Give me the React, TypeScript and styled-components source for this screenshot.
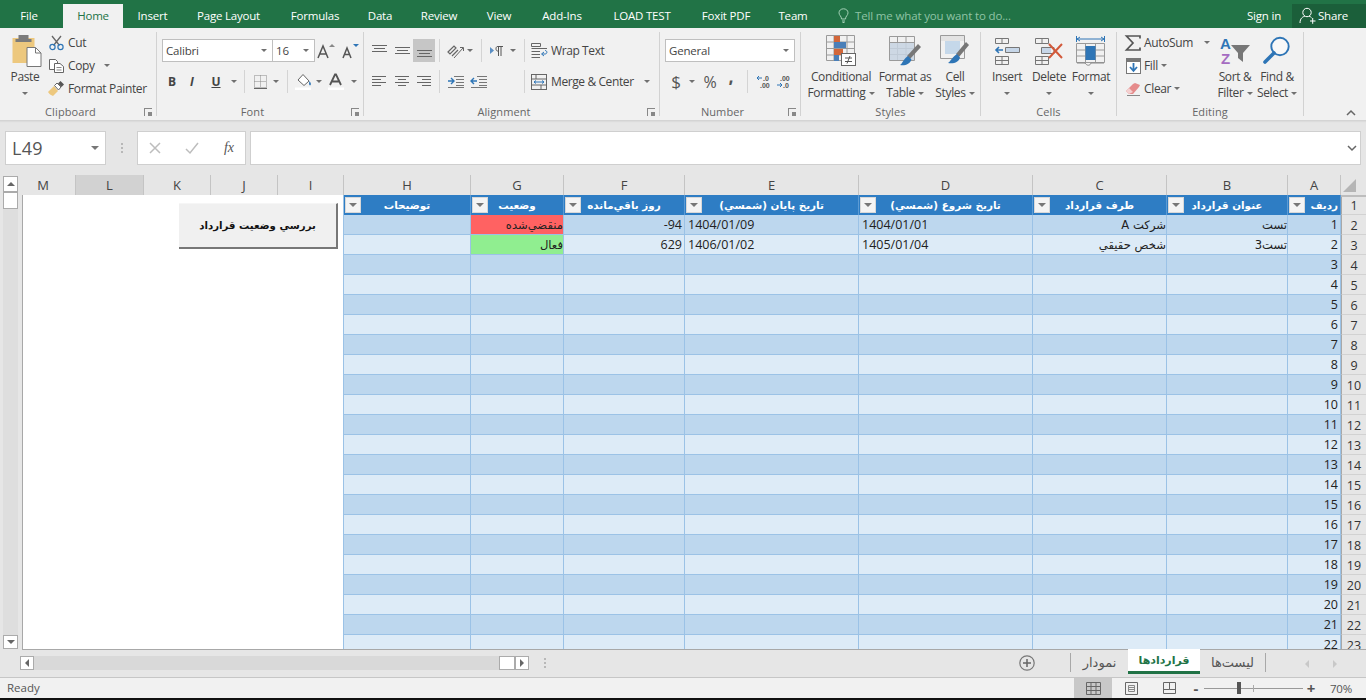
import React from "react";
import styled, { createGlobalStyle } from "styled-components";

const Global = createGlobalStyle`
  html, body { margin: 0; padding: 0; background: #e6e6e6; overflow: hidden; }
  * { box-sizing: border-box; }
`;

const UI = `"Open Sans", "DejaVu Sans", sans-serif`;
const AR = `"DejaVu Sans", "Noto Sans", sans-serif`;

const App_ = styled.div`
  width: 1366px; height: 700px; display: flex; flex-direction: column;
  font-family: ${UI}; color: #444; background: #e6e6e6; overflow: hidden;
`;

/* Title tabs */
const TabStrip = styled.div`
  height: 28px; background: #217346; display: flex; align-items: flex-end; flex: none;
`;
const MenuTab = styled.div<{ $w: number; $on?: boolean }>`
  width: ${p => p.$w}px; height: 24px; line-height: 23px; text-align: center; font-size: 11.5px;
  letter-spacing: -0.2px; color: ${p => (p.$on ? "#217346" : "#fff")};
  background: ${p => (p.$on ? "#f1f1f1" : "transparent")};
  &:first-child { padding-right: 5px; }
`;
const TellMe = styled.div`
  display: flex; align-items: center; gap: 6px; height: 24px; padding: 0 0 1px 19px; font-size: 11.5px;
  letter-spacing: -0.15px; color: #8fc3a5; flex: 1;
`;
const SignIn = styled.div`
  height: 24px; line-height: 23px; font-size: 11.5px; letter-spacing: -0.2px; color: #fff; margin-right: 11px;
`;
const ShareBtn = styled.div`
  width: 74px; height: 24px; background: #1b5f3a; color: #fff; font-size: 11.5px; letter-spacing: -0.2px;
  display: flex; align-items: center; gap: 2px; padding: 0 0 1px 7px;
`;

/* Ribbon */
const Ribbon = styled.div`
  height: 93px; background: #f1f1f1; display: flex; padding-top: 4px; flex: none;
  border-bottom: 1px solid #d4d4d4; box-shadow: 0 1px 1px #dcdcdc; position: relative;
`;
const Group = styled.div<{ $w: number }>`
  width: ${p => p.$w}px; height: 84px; border-right: 1px solid #d2d2d2; flex: none; position: relative;
  display: flex; flex-direction: column;
`;
const GroupBody = styled.div<{ $pl?: number }>`
  height: 72px; display: flex; padding-left: ${p => p.$pl ?? 0}px;
`;
const GroupLabel = styled.div<{ $launch?: boolean }>`
  height: 12px; line-height: 16px; text-align: center; font-size: 11px; color: #666; letter-spacing: 0.1px;
  padding-right: ${p => (p.$launch ? 15 : 0)}px;
`;
const Launcher = styled.div`
  position: absolute; right: 4px; bottom: 0; width: 8px; height: 8px;
  border-left: 1px solid #888; border-top: 1px solid #888;
  &::after { content: ""; position: absolute; right: 0; bottom: 0; width: 4px; height: 4px; background: #888; }
`;
const TwoRows = styled.div`
  display: flex; flex-direction: column; gap: 8px; padding-top: 7px;
`;
const ToolRow = styled.div`
  height: 23px; display: flex; align-items: center;
`;
const Tool = styled.div<{ $w: number; $on?: boolean }>`
  width: ${p => p.$w}px; height: 23px; flex: none; display: flex; align-items: center; justify-content: center;
  background: ${p => (p.$on ? "#c6c6c6" : "transparent")};
  font-size: 12px; font-weight: 700; color: #444;
`;
const BigGlyph = styled.span<{ $s: number; $bold?: boolean; $up?: number }>`
  font-size: ${p => p.$s}px; font-weight: ${p => (p.$bold ? 800 : 400)}; color: #555; line-height: 1;
  margin-top: -${p => p.$up ?? 0}px;
`;
const VSep = styled.div<{ $w?: number }>`
  width: ${p => p.$w ?? 8}px; height: 23px; flex: none; position: relative;
  &::after { content: ""; position: absolute; left: 50%; top: 0; bottom: 0; width: 1px; background: #d4d4d4; }
`;
const Caret = styled.span`
  display: block; width: 0; height: 0; border-left: 3px solid transparent; border-right: 3px solid transparent;
  border-top: 3px solid #707070; flex: none;
`;
const Combo = styled.div<{ $w: number }>`
  width: ${p => p.$w}px; height: 23px; background: #fff; border: 1px solid #bfbfbf; flex: none;
  display: flex; align-items: center; justify-content: space-between; padding: 0 5px 0 3px;
  font-size: 11.5px; letter-spacing: -0.2px; color: #444;
  & + & { border-left: 0; }
`;
const Stack = styled.div<{ $w: number }>`
  width: ${p => p.$w}px; flex: none; display: flex; flex-direction: column; margin-top: -1px;
`;
const SmallItem = styled.div`
  height: 23px; display: flex; align-items: center; font-size: 12px; letter-spacing: -0.35px; color: #444;
`;
const IconCell = styled.div<{ $w: number }>`
  width: ${p => p.$w}px; flex: none; display: flex; justify-content: center; align-items: center;
`;
const ItemCaret = styled(Caret)<{ $ml: number }>`
  margin-left: ${p => p.$ml}px;
`;
const TextTool = styled.div`
  height: 23px; display: flex; align-items: center; font-size: 12px; letter-spacing: -0.4px; color: #444; white-space: nowrap;
`;
const Large = styled.div<{ $w: number }>`
  width: ${p => p.$w}px; flex: none; display: flex; flex-direction: column; align-items: center;
  font-size: 12px; letter-spacing: -0.35px; color: #444; text-align: center;
`;
const LargeIcon = styled.div`
  height: 37px; display: flex; align-items: center; justify-content: center;
`;
const LargeLine = styled.div`
  height: 16px; line-height: 16px; display: flex; align-items: center; justify-content: center; gap: 3px; white-space: nowrap;
`;
const Collapse = styled.div`
  position: absolute; right: 10px; bottom: 4px;
`;

/* Formula bar */
const FormulaBar = styled.div`
  height: 54px; padding: 10px 5px 10px 5px; display: flex; background: #e6e6e6; flex: none;
`;
const NameBox = styled.div`
  width: 101px; background: #fff; border: 1px solid #cfcfcf; display: flex; align-items: center;
  justify-content: space-between; padding: 0 6px 0 6px; font-size: 18px; color: #555; letter-spacing: 0.3px;
`;
const Dots = styled.div<{ $w: number }>`
  width: ${p => p.$w}px; flex: none; display: flex; flex-direction: column; align-items: center; justify-content: center; gap: 2px;
  & > i { width: 2px; height: 2px; background: #b8b8b8; display: block; }
`;
const FxBox = styled.div`
  width: 109px; background: #fff; border: 1px solid #cfcfcf; display: flex; align-items: center;
  justify-content: space-between; padding: 0 11px; margin-right: 4px;
`;
const FxText = styled.span`
  font-family: "Liberation Serif", serif; font-style: italic; font-size: 14px; color: #555;
`;
const FormulaInput = styled.div`
  width: 1111px; background: #fff; border: 1px solid #cfcfcf; display: flex; align-items: center; justify-content: flex-end; padding-right: 3px;
`;

/* Sheet */
const COLS = [54, 68, 67, 67, 66, 127, 93, 121, 174, 174, 134, 121, 53, 25];
const LETTERS = ["M", "L", "K", "J", "I", "H", "G", "F", "E", "D", "C", "B", "A"];
const DATACOLS = COLS.slice(5).map(n => n + "px").join(" ");

const Sheet = styled.div`
  height: 475px; display: flex; flex: none;
`;
const VScroll = styled.div`
  width: 22px; flex: none; padding: 1px 4px 1px 3px; display: flex; flex-direction: column;
`;
const ScrollBtn = styled.div<{ $h: number }>`
  width: 15px; height: ${p => p.$h}px; background: #fff; border: 1px solid #ababab; display: flex; align-items: center; justify-content: center; flex: none;
`;
const VTrough = styled.div`
  flex: 1; background: #dedede;
`;
const SheetMain = styled.div`
  width: 1344px; display: flex; flex-direction: column; flex: none;
`;
const ColHeaders = styled.div`
  height: 20px; display: grid; grid-template-columns: ${COLS.map(n => n + "px").join(" ")}; flex: none;
`;
const ColHead = styled.div<{ $on?: boolean; $first?: boolean }>`
  font-size: 13px; line-height: 20px; text-align: center; color: #444;
  padding-right: ${p => (p.$first ? 11 : 0)}px;
  background: ${p => (p.$on ? "#d2d2d2" : "transparent")};
  border-right: 1px solid #c4c4c4; border-bottom: 2px solid ${p => (p.$on ? "#217346" : "#bdbdbd")};
`;
const Corner = styled.div`
  position: relative; border-bottom: 2px solid #bdbdbd;
  &::after {
    content: ""; position: absolute; right: 10px; bottom: 3px; width: 0; height: 0;
    border-left: 13px solid transparent; border-bottom: 13px solid #b5b5b5;
  }
`;
const SheetBody = styled.div`
  flex: 1; display: flex; overflow: hidden; border-bottom: 1px solid #a8a8a8;
`;
const WhitePane = styled.div`
  width: 322px; flex: none; background: #fff; position: relative; border-left: 1px solid #a8a8a8; border-right: 1px solid #9bc2e6;
`;
const MacroButton = styled.div`
  position: absolute; left: 156px; top: 8px; width: 159px; height: 46px; background: #f0f0f0;
  border-right: 2px solid #777; border-bottom: 2px solid #777; border-top: 1px solid #f6f6f6;
  display: flex; align-items: center; justify-content: center;
  direction: rtl; font-family: ${AR}; font-weight: 700; font-size: 10.2px; color: #111;
`;
const DataGrid = styled.div`
  display: grid; grid-template-columns: ${DATACOLS}; grid-auto-rows: 20px; flex: none; align-content: start;
`;
const HeadCell = styled.div<{ $edge?: boolean }>`
  background: #2e7dc4; border-right: 1px solid #5b9bd5; display: flex; align-items: center; position: relative;
  color: #fff; font-family: ${AR}; font-weight: 700; font-size: 10.4px; direction: rtl;
  justify-content: ${p => (p.$edge ? "flex-start" : "center")};
  padding-right: ${p => (p.$edge ? 2 : 0)}px;
`;
const FilterBtn = styled.span`
  position: absolute; left: 1px; top: 2px; width: 16px; height: 16px; background: #f4f4f4;
  border: 1px solid #d8d8d8; display: flex; align-items: center; justify-content: center;
  &::after { content: ""; border-left: 4px solid transparent; border-right: 4px solid transparent; border-top: 4px solid #777; }
`;
const Cell = styled.div<{ $alt: boolean; $bg?: string; $kind?: "ar" | "num" | "date" }>`
  background: ${p => p.$bg ?? (p.$alt ? "#ddebf7" : "#bdd7ee")};
  border-right: 1px solid #9bc2e6; border-bottom: 1px solid #9bc2e6;
  line-height: 20px; white-space: nowrap; overflow: hidden; color: #222;
  padding: 0 ${p => (p.$kind === "num" ? 2 : 0)}px 0 ${p => (p.$kind === "date" ? 3 : 0)}px;
  text-align: ${p => (p.$kind === "date" ? "left" : "right")};
  direction: ${p => (p.$kind === "ar" ? "rtl" : "ltr")};
  ${p => (p.$kind === "ar" ? "text-align: start;" : "")}
  font-family: ${p => (p.$kind === "ar" ? AR : UI)};
  font-size: ${p => (p.$kind === "ar" ? "11.6px" : "12.5px")};
`;
const RowHead = styled.div`
  background: #e6e6e6; border-bottom: 1px solid #d2d2d2; text-align: center; font-size: 12.5px; line-height: 21px; color: #333;
  border-left: 1px solid #a8a8a8;
`;

/* Tab bar */
const TabBar = styled.div`
  height: 27px; display: flex; background: #e6e6e6; flex: none; padding-left: 20px;
`;
const HScroll = styled.div`
  width: 509px; height: 14px; margin-top: 6px; display: flex; flex: none;
`;
const HButton = styled.div`
  width: 14px; height: 14px; background: #fff; border: 1px solid #ababab; display: flex; align-items: center; justify-content: center; flex: none;
`;
const HTrough = styled.div`
  flex: 1; background: #d9d9d9;
`;
const HThumb = styled.div`
  width: 16px; background: #fff; border: 1px solid #ababab; flex: none;
`;
const HDots = styled(Dots)`
  height: 14px; margin-top: 6px;
`;
const PlusWrap = styled.div`
  width: 86px; margin-left: 423px; flex: none; display: flex; align-items: center; justify-content: center; padding-bottom: 1px;
`;
const SheetTabs = styled.div`
  display: flex; align-items: flex-start; flex: none; border-left: 1px solid #a8a8a8; margin-top: 3px; height: 19px;
`;
const SheetTab = styled.div<{ $w: number; $on?: boolean; $last?: boolean }>`
  width: ${p => p.$w}px; height: ${p => (p.$on ? 25 : 19)}px; margin-top: ${p => (p.$on ? -4 : 0)}px; flex: none;
  display: flex; align-items: center; justify-content: center; direction: rtl;
  font-family: ${AR}; font-size: ${p => (p.$on ? 11 : 13)}px; font-weight: ${p => (p.$on ? 700 : 400)};
  color: ${p => (p.$on ? "#217346" : "#555")};
  background: ${p => (p.$on ? "#fff" : "transparent")};
  border-bottom: ${p => (p.$on ? "3px solid #217346" : "0")};
  border-right: ${p => (p.$last ? "1px solid #a8a8a8" : "0")};
`;
const NavArrows = styled.div`
  flex: 1; display: flex; align-items: center; justify-content: flex-end; gap: 20px; padding-right: 27px;
`;

/* Status */
const Status = styled.div`
  height: 21px; background: #f1f1f1; border-top: 1px solid #c6c6c6; display: flex; align-items: center; flex: none;
  font-size: 11.5px; color: #555; padding-left: 7px;
`;
const ReadyText = styled.span`
  margin-top: -2px;
`;
const ViewBtn = styled.div<{ $on?: boolean }>`
  width: 38px; height: 20px; flex: none; display: flex; align-items: center; justify-content: center;
  background: ${p => (p.$on ? "#c8c8c8" : "transparent")};
`;
const ViewGroup = styled.div`
  margin-left: auto; display: flex; align-items: center;
`;
const ZoomSign = styled.div`
  width: 16px; flex: none; text-align: center; font-size: 15px; font-weight: 700; color: #555; line-height: 20px;
`;
const Slider = styled.div`
  width: 99px; height: 1px; background: #999; position: relative; flex: none;
`;
const SliderThumb = styled.div`
  position: absolute; left: 33px; top: -6px; width: 4px; height: 12px; background: #555;
`;
const SliderTick = styled.div`
  position: absolute; left: 49px; top: -3px; width: 1px; height: 7px; background: #aaa;
`;
const ZoomPct = styled.div`
  width: 47px; text-align: right; padding-right: 14px; flex: none; font-size: 11.5px; letter-spacing: -0.2px;
`;
const BottomLine = styled.div`
  height: 2px; background: #111; flex: none;
`;

/* Icons */
const S = styled.svg`
  display: block; flex: none; overflow: visible;
`;
const Ic = ({ w, h, children }: { w: number; h: number; children: React.ReactNode }) => (
  <S width={w} height={h} viewBox={`0 0 ${w} ${h}`} fill="none">{children}</S>
);
const Lines = ({ ys, xs, w = 15, c = "#666" }: { ys: number[]; xs: [number, number][]; w?: number; c?: string }) => (
  <Ic w={w} h={15}>
    {ys.map((y, i) => <path key={i} d={`M${xs[i][0]} ${y + 0.5}H${xs[i][1]}`} stroke={c} />)}
  </Ic>
);
const PasteI = () => (
  <Ic w={30} h={33}>
    <g transform="translate(1.5 0)">
      <rect x="1" y="4" width="22" height="25" fill="#edc87e" />
      <rect x="7" y="1" width="10" height="6" fill="#7b7b7b" />
      <rect x="4" y="5" width="16" height="3" fill="#7b7b7b" />
      <path d="M15.5 13.5H24L29.5 19V32.5H15.5Z" fill="#fff" stroke="#777" />
      <path d="M24 13.5V19H29.5" stroke="#777" />
    </g>
  </Ic>
);
const CutI = () => (
  <Ic w={15} h={15}>
    <path d="M3 1L10.5 10.5M12 1L4.5 10.5" stroke="#666" strokeWidth="1.3" />
    <circle cx="3.5" cy="12" r="2.6" stroke="#2e75b6" strokeWidth="1.2" />
    <circle cx="11.5" cy="12" r="2.6" stroke="#2e75b6" strokeWidth="1.2" />
  </Ic>
);
const CopyI = () => (
  <Ic w={15} h={15}>
    <path d="M.5 1.5H6.5L8.5 3.5V11.5H.5Z" fill="#fff" stroke="#666" />
    <path d="M5.5 5.5H11L14.5 8.5V14.5H5.5Z" fill="#fff" stroke="#666" />
    <path d="M7.5 9.5H12.5M7.5 12H12.5" stroke="#888" />
  </Ic>
);
const PainterI = () => (
  <Ic w={16} h={15}>
    <path d="M0 11L6 5L10 10L5 15C3 14 1 13 0 11Z" fill="#edc87e" />
    <path d="M6.5 4.5L9 2L13 6L10.5 9Z" fill="#fff" stroke="#666" />
    <path d="M10 2.5L12.5 0L16 3.5L13.5 6Z" fill="#555" />
  </Ic>
);
const BigA = ({ up }: { up: boolean }) => (
  <Ic w={20} h={16}>
    <path d={up ? "M1 15L6 3L11 15M3 11H9" : "M3 15L7 5L11 15M4.5 11.5H9.5"} stroke="#555" strokeWidth="1.5" />
    <path d={up ? "M12 4L15 1L18 4Z" : "M13 1H19L16 4Z"} fill={up ? "#888" : "#2e75b6"} />
  </Ic>
);
const BorderI = () => (
  <Ic w={15} h={15}>
    <path d="M1.5 1.5H13.5V13.5H1.5ZM7.5 1.5V13.5M1.5 7.5H13.5" stroke="#888" strokeDasharray="1 1" />
    <path d="M1 14.5H14" stroke="#666" />
  </Ic>
);
const FillI = () => (
  <Ic w={18} h={17}>
    <path d="M3 7L8 1.5L14 8L9 12.5Z" fill="#fff" stroke="#666" />
    <path d="M14.5 8C16 10 16.5 12 15 12.5C13.5 12 14 10 14.5 8Z" fill="#2e75b6" />
    <rect x="0" y="14.5" width="16" height="2.5" fill="#fff" />
  </Ic>
);
const FontColorI = () => (
  <Ic w={18} h={17}>
    <path d="M3 12L8 1.5H9L14 12M5 8.5H12" stroke="#555" strokeWidth="1.8" />
    <rect x="1" y="14.5" width="16" height="2.5" fill="#fff" />
  </Ic>
);
const OrientI = () => (
  <Ic w={17} h={16}>
    <path d="M1 9L7 3L9 5L3 11ZM5 13L11 7" stroke="#666" strokeWidth="1.2" />
    <path d="M7 15L16 5" stroke="#666" />
    <path d="M13 4.5H16.5V8" stroke="#666" />
  </Ic>
);
const RtlI = () => (
  <Ic w={14} h={12}>
    <path d="M0 2L4 5.5L0 9Z" fill="#5b8fc4" />
    <path d="M10 1.5H7.5C5.5 1.5 5.5 6 7.5 6H8M8.5 1.5V11M11 1.5V11M7.5 1.5H13" stroke="#555" />
  </Ic>
);
const WrapI = () => (
  <Ic w={17} h={16}>
    <path d="M.5 .5H9.5V3.5H.5ZM.5 5.5H16M.5 8.5H9M.5 11.5H9M.5 14.5H9" stroke="#666" />
    <path d="M11 11H14C16.5 11 16.5 7.5 14 7.5" stroke="#2e75b6" />
    <path d="M13 9L10.5 11L13 13" stroke="#2e75b6" />
  </Ic>
);
const MergeI = () => (
  <Ic w={16} h={16}>
    <rect x=".5" y=".5" width="15" height="15" stroke="#666" />
    <path d="M.5 5H15.5M.5 11H15.5M5 .5V5M10 11V15.5" stroke="#666" />
    <path d="M3 8H13M5 6.5L3 8L5 9.5M11 6.5L13 8L11 9.5" stroke="#2e75b6" />
  </Ic>
);
const IndentI = ({ flip }: { flip?: boolean }) => (
  <Ic w={17} h={13}>
    <path d="M7 1.5H17M9 4.5H17M9 7.5H17M9 10.5H17" stroke="#777" />
    <path d={flip ? "M7 6H1M4 3L1 6L4 9" : "M1 6H7M4 3L7 6L4 9"} stroke="#2e75b6" strokeWidth="1.4" />
    <path d="M1 12.5H17" stroke="#777" />
  </Ic>
);
const DecI = ({ more }: { more: boolean }) => (
  <Ic w={16} h={14}>
    <text x={more ? 7 : 4} y="6" fontSize="7" fontFamily="Liberation Sans" fill="#555">{more ? ".0" : ".00"}</text>
    <text x={more ? 4 : 7} y="13" fontSize="7" fontFamily="Liberation Sans" fill="#555">{more ? ".00" : ".0"}</text>
    <path d={more ? "M6 3H1M3 1L1 3L3 5" : "M1 10H6M4 8L6 10L4 12"} stroke="#2e75b6" />
  </Ic>
);
const grid = "#9a9a9a";
const CondI = () => (
  <Ic w={30} h={32}>
    <path d="M.5 .5H28.5V25.5H.5ZM.5 7H28.5M.5 13.5H28.5M.5 20H28.5M8 .5V25.5M21 .5V25.5" stroke={grid} />
    <rect x="8" y="1" width="6" height="6" fill="#d2673a" />
    <rect x="8" y="7" width="12" height="6" fill="#4a7fb8" />
    <rect x="8" y="14" width="9" height="6" fill="#d2673a" />
    <rect x="8" y="20" width="5" height="6" fill="#4a7fb8" />
    <rect x="15.5" y="18.5" width="14" height="12" fill="#fff" stroke="#666" />
    <path d="M19 23H26M19 26.5H26M24 21L21 28.5" stroke="#555" />
  </Ic>
);
const TableI = () => (
  <Ic w={34} h={32}>
    <path d="M1.5 1.5H26.5V25.5H1.5ZM1.5 7.5H26.5M1.5 13.5H26.5M1.5 19.5H26.5M9.5 1.5V25.5M18 1.5V25.5" stroke={grid} />
    <rect x="2" y="8" width="24" height="17" fill="#c7d4e2" opacity=".85" />
    <path d="M33 12L22 24L19 21L30 9Z" fill="#777" />
    <path d="M20 21L23.5 24.5C22 29 17 31 12 30C15 28 15 24 20 21Z" fill="#2e75b6" />
  </Ic>
);
const CellStyleI = () => (
  <Ic w={30} h={32}>
    <path d="M.5 .5H24.5V23.5H.5Z" stroke={grid} />
    <rect x="1" y="1" width="23" height="5" fill="#e3e3e3" />
    <rect x="5" y="6" width="15" height="13" fill="#c5d8ea" />
    <path d="M29 10L19 22L16 19L26 7Z" fill="#777" />
    <path d="M17 19L20 22.5C19 27 14 29 8 28C11 26 12 22 17 19Z" fill="#2e75b6" />
  </Ic>
);
const InsertI = () => (
  <Ic w={28} h={28}>
    <path d="M2.5 1.5H15.5V6.5H2.5ZM9 1.5V6.5M12.5 10.5H26.5V15.5H12.5ZM17 10.5V15.5M22 10.5V15.5M2.5 19.5H15.5V27.5H2.5ZM9 19.5V27.5M2.5 23.5H15.5" stroke="#777" />
    <rect x="13" y="11" width="13" height="4" fill="#c6d6e8" />
    <path d="M10 13H3M6 10L3 13L6 16" stroke="#2e75b6" strokeWidth="1.6" />
  </Ic>
);
const DeleteI = () => (
  <Ic w={30} h={28}>
    <path d="M1.5 1.5H14.5V6.5H1.5ZM8 1.5V6.5M7.5 10.5H20V16.5H7.5ZM1.5 19.5H14.5V27.5H1.5ZM8 19.5V27.5M1.5 23.5H14.5" stroke="#777" />
    <rect x="8" y="11" width="9" height="5" fill="#c6d6e8" />
    <path d="M15 7L28 21M28 7L15 21" stroke="#d2593a" strokeWidth="2" />
  </Ic>
);
const FormatI = () => (
  <Ic w={30} h={31}>
    <path d="M.5 1V7M28.5 1V7M1 4H28M4 2L1 4L4 6M25 2L28 4L25 6" stroke="#2e75b6" />
    <path d="M.5 8.5H28.5V27.5H.5ZM.5 15H28.5M.5 21H28.5M9.5 8.5V27.5M19.5 8.5V27.5" stroke={grid} />
    <rect x="9.5" y="11" width="10" height="14" fill="#2e75b6" />
    <path d="M1 28H9C11 31 14 31 15 28H28" stroke="#888" fill="#f1f1f1" />
  </Ic>
);
const SumI = () => (
  <Ic w={16} h={16}>
    <path d="M15 3.5V1H1.5L8 8L1.5 15H15V12.5" stroke="#555" strokeWidth="1.7" />
  </Ic>
);
const FillDownI = () => (
  <Ic w={15} h={16}>
    <rect x=".5" y=".5" width="14" height="15" fill="#fff" stroke="#777" />
    <rect x="0" y="0" width="15" height="4" fill="#777" />
    <path d="M7.5 5V12M4 9L7.5 13L11 9" stroke="#2e75b6" strokeWidth="1.8" />
  </Ic>
);
const ClearI = () => (
  <Ic w={15} h={14}>
    <path d="M0 9L7 2L9 1L14 3L13 5L7 12H3Z" fill="#e58b8b" />
    <path d="M3 12L0 9L3 6L7 10Z" fill="#f4d0d0" />
    <path d="M1 13.5H14" stroke="#888" />
  </Ic>
);
const SortI = () => (
  <Ic w={31} h={29}>
    <text x="0" y="13" fontSize="15" fontWeight="700" fontFamily="Liberation Sans" fill="#2e75b6">A</text>
    <text x="1" y="28" fontSize="15" fontWeight="700" fontFamily="Liberation Sans" fill="#a56cc1">Z</text>
    <path d="M11 9H30L23 17V26L18 22V17Z" fill="#777" />
  </Ic>
);
const FindI = () => (
  <Ic w={28} h={29}>
    <circle cx="17" cy="10.5" r="8.7" stroke="#2e75b6" strokeWidth="1.9" fill="#fff" fillOpacity=".5" />
    <path d="M11 17L2 26" stroke="#2e75b6" strokeWidth="3.6" strokeLinecap="round" />
  </Ic>
);
const BulbI = () => (
  <Ic w={11} h={15}>
    <path d="M3.5 11C3.5 8 1 7.5 1 4.8C1 2.4 3 .8 5.5 .8C8 .8 10 2.4 10 4.8C10 7.5 7.5 8 7.5 11ZM4 13H7M4.5 14.5H6.5" stroke="#a6d2b8" />
  </Ic>
);
const PersonI = () => (
  <Ic w={17} h={17}>
    <circle cx="8" cy="5.5" r="4.2" stroke="#fff" />
    <path d="M1 16C1 11 4 9.8 6 9M10 9C11 9.4 12 10 12.6 10.8M11 14H16.5M13.7 11V16.8" stroke="#fff" />
  </Ic>
);
const Chevron = ({ up, c = "#666" }: { up?: boolean; c?: string }) => (
  <Ic w={10} h={6}>
    <path d={up ? "M1 5L5 1L9 5" : "M1 1L5 5L9 1"} stroke={c} strokeWidth="1.5" />
  </Ic>
);
const Tri = ({ d, c = "#666" }: { d: "u" | "d" | "l" | "r"; c?: string }) => {
  const paths = { u: "M0 6L4 2L8 6Z", d: "M0 2L8 2L4 6Z", l: "M6 0V8L2 4Z", r: "M2 0V8L6 4Z" };
  return <Ic w={8} h={8}><path d={paths[d]} fill={c} /></Ic>;
};

const menu: [string, number, boolean?][] = [
  ["File", 63], ["Home", 60, true], ["Insert", 59], ["Page Layout", 93], ["Formulas", 80], ["Data", 50],
  ["Review", 68], ["View", 52], ["Add-Ins", 74], ["LOAD TEST", 86], ["Foxit PDF", 82], ["Team", 52],
];
const L3 = (a: number, b: number, c: number) => [a, b, c];

const headers = ["توضيحات", "وضعيت", "روز باقي‌مانده", "تاريخ پايان (شمسي)", "تاريخ شروع (شمسي)", "طرف قرارداد", "عنوان قرارداد", "رديف"];

type Row = { g?: string; gBg?: string; f?: string; e?: string; d?: string; c?: string; b?: string };
const rows: Row[] = [
  { g: "منقضي‌شده", gBg: "#ff6262", f: "-94", e: "1404/01/09", d: "1404/01/01", c: "شركت A", b: "تست" },
  { g: "فعال", gBg: "#90ee90", f: "629", e: "1406/01/02", d: "1405/01/04", c: "شخص حقيقي", b: "تست3" },
];

const dataRows = Array.from({ length: 22 }, (_, i) => i);

export default function App() {
  return (
    <App_>
      <Global />
      <TabStrip>
        {menu.map(([t, w, on]) => <MenuTab key={t} $w={w} $on={on}>{t}</MenuTab>)}
        <TellMe><BulbI />Tell me what you want to do...</TellMe>
        <SignIn>Sign in</SignIn>
        <ShareBtn><PersonI />Share</ShareBtn>
      </TabStrip>

      <Ribbon>
        <Group $w={157}>
          <GroupBody $pl={6}>
            <Large $w={38}>
              <LargeIcon><PasteI /></LargeIcon>
              <LargeLine>Paste</LargeLine>
              <LargeLine><Caret /></LargeLine>
            </Large>
            <Stack $w={110}>
              <SmallItem><IconCell $w={24}><CutI /></IconCell>Cut</SmallItem>
              <SmallItem><IconCell $w={24}><CopyI /></IconCell>Copy<ItemCaret $ml={9} /></SmallItem>
              <SmallItem><IconCell $w={24}><PainterI /></IconCell>Format Painter</SmallItem>
            </Stack>
          </GroupBody>
          <GroupLabel $launch>Clipboard</GroupLabel>
          <Launcher />
        </Group>

        <Group $w={207}>
          <GroupBody $pl={5}>
            <TwoRows>
              <ToolRow>
                <Combo $w={111}>Calibri<Caret /></Combo>
                <Combo $w={42}>16<Caret /></Combo>
                <Tool $w={24}><BigA up /></Tool>
                <Tool $w={22}><BigA up={false} /></Tool>
              </ToolRow>
              <ToolRow>
                <Tool $w={20}>B</Tool>
                <Tool $w={20}><i>I</i></Tool>
                <Tool $w={28}><u>U</u></Tool>
                <Tool $w={8}><Caret /></Tool>
                <VSep $w={12} />
                <Tool $w={20}><BorderI /></Tool>
                <Tool $w={12}><Caret /></Tool>
                <VSep $w={10} />
                <Tool $w={24}><FillI /></Tool>
                <Tool $w={6}><Caret /></Tool>
                <Tool $w={28}><FontColorI /></Tool>
                <Tool $w={8}><Caret /></Tool>
              </ToolRow>
            </TwoRows>
          </GroupBody>
          <GroupLabel $launch>Font</GroupLabel>
          <Launcher />
        </Group>

        <Group $w={296}>
          <GroupBody $pl={4}>
            <TwoRows>
              <ToolRow>
                <Tool $w={23}><Lines ys={L3(2, 5, 8)} xs={[[0, 15], [2, 13], [0, 15]]} /></Tool>
                <Tool $w={22}><Lines ys={L3(4, 7, 10)} xs={[[0, 15], [2, 13], [0, 15]]} /></Tool>
                <Tool $w={22} $on><Lines ys={L3(7, 10, 13)} xs={[[0, 15], [2, 13], [0, 15]]} /></Tool>
                <VSep />
                <Tool $w={24}><OrientI /></Tool>
                <Tool $w={6}><Caret /></Tool>
                <VSep $w={16} />
                <Tool $w={16}><RtlI /></Tool>
                <Tool $w={16}><Caret /></Tool>
                <VSep $w={6} />
                <Tool $w={24}><WrapI /></Tool>
                <TextTool>Wrap Text</TextTool>
              </ToolRow>
              <ToolRow>
                <Tool $w={23}><Lines ys={[2, 5, 8, 11]} xs={[[0, 14], [0, 9], [0, 14], [0, 9]]} /></Tool>
                <Tool $w={22}><Lines ys={[2, 5, 8, 11]} xs={[[0, 14], [3, 11], [0, 14], [3, 11]]} /></Tool>
                <Tool $w={22}><Lines ys={[2, 5, 8, 11]} xs={[[0, 14], [5, 14], [0, 14], [5, 14]]} /></Tool>
                <VSep />
                <Tool $w={24}><IndentI /></Tool>
                <Tool $w={22}><IndentI flip /></Tool>
                <Tool $w={32} />
                <VSep $w={6} />
                <Tool $w={24}><MergeI /></Tool>
                <TextTool>Merge &amp; Center</TextTool>
                <ItemCaret $ml={10} />
              </ToolRow>
            </TwoRows>
          </GroupBody>
          <GroupLabel $launch>Alignment</GroupLabel>
          <Launcher />
        </Group>

        <Group $w={141}>
          <GroupBody $pl={5}>
            <TwoRows>
              <ToolRow>
                <Combo $w={130}>General<Caret /></Combo>
              </ToolRow>
              <ToolRow>
                <Tool $w={22}><BigGlyph $s={17}>$</BigGlyph></Tool>
                <Tool $w={10}><Caret /></Tool>
                <Tool $w={26}><BigGlyph $s={16}>%</BigGlyph></Tool>
                <Tool $w={16}><BigGlyph $s={15} $bold $up={8}>,</BigGlyph></Tool>
                <VSep $w={16} />
                <Tool $w={18}><DecI more /></Tool>
                <Tool $w={22}><DecI more={false} /></Tool>
              </ToolRow>
            </TwoRows>
          </GroupBody>
          <GroupLabel $launch>Number</GroupLabel>
          <Launcher />
        </Group>

        <Group $w={180}>
          <GroupBody>
            <Large $w={80}>
              <LargeIcon><CondI /></LargeIcon>
              <LargeLine>Conditional</LargeLine>
              <LargeLine>Formatting<Caret /></LargeLine>
            </Large>
            <Large $w={48}>
              <LargeIcon><TableI /></LargeIcon>
              <LargeLine>Format as</LargeLine>
              <LargeLine>Table<Caret /></LargeLine>
            </Large>
            <Large $w={52}>
              <LargeIcon><CellStyleI /></LargeIcon>
              <LargeLine>Cell</LargeLine>
              <LargeLine>Styles<Caret /></LargeLine>
            </Large>
          </GroupBody>
          <GroupLabel>Styles</GroupLabel>
        </Group>

        <Group $w={136}>
          <GroupBody $pl={3}>
            <Large $w={46}>
              <LargeIcon><InsertI /></LargeIcon>
              <LargeLine>Insert</LargeLine>
              <LargeLine><Caret /></LargeLine>
            </Large>
            <Large $w={38}>
              <LargeIcon><DeleteI /></LargeIcon>
              <LargeLine>Delete</LargeLine>
              <LargeLine><Caret /></LargeLine>
            </Large>
            <Large $w={46}>
              <LargeIcon><FormatI /></LargeIcon>
              <LargeLine>Format</LargeLine>
              <LargeLine><Caret /></LargeLine>
            </Large>
          </GroupBody>
          <GroupLabel>Cells</GroupLabel>
        </Group>

        <Group $w={187}>
          <GroupBody $pl={5}>
            <Stack $w={92}>
              <SmallItem><IconCell $w={22}><SumI /></IconCell>AutoSum<ItemCaret $ml={11} /></SmallItem>
              <SmallItem><IconCell $w={22}><FillDownI /></IconCell>Fill<ItemCaret $ml={3} /></SmallItem>
              <SmallItem><IconCell $w={22}><ClearI /></IconCell>Clear<ItemCaret $ml={3} /></SmallItem>
            </Stack>
            <Large $w={42}>
              <LargeIcon><SortI /></LargeIcon>
              <LargeLine>Sort &amp;</LargeLine>
              <LargeLine>Filter<Caret /></LargeLine>
            </Large>
            <Large $w={42}>
              <LargeIcon><FindI /></LargeIcon>
              <LargeLine>Find &amp;</LargeLine>
              <LargeLine>Select<Caret /></LargeLine>
            </Large>
          </GroupBody>
          <GroupLabel>Editing</GroupLabel>
        </Group>
        <Collapse><Chevron up /></Collapse>
      </Ribbon>

      <FormulaBar>
        <NameBox>L49<Tri d="d" c="#777" /></NameBox>
        <Dots $w={31}><i /><i /><i /></Dots>
        <FxBox>
          <Ic w={12} h={12}><path d="M1 1L11 11M11 1L1 11" stroke="#bdbdbd" strokeWidth="1.5" /></Ic>
          <Ic w={14} h={12}><path d="M1 7L5 11L13 1" stroke="#bdbdbd" strokeWidth="1.5" /></Ic>
          <FxText>fx</FxText>
        </FxBox>
        <FormulaInput><Chevron /></FormulaInput>
      </FormulaBar>

      <Sheet>
        <VScroll>
          <ScrollBtn $h={16}><Tri d="u" /></ScrollBtn>
          <ScrollBtn $h={17} />
          <VTrough />
          <ScrollBtn $h={14}><Tri d="d" /></ScrollBtn>
        </VScroll>
        <SheetMain>
          <ColHeaders>
            {LETTERS.map(l => <ColHead key={l} $on={l === "L"} $first={l === "M"}>{l}</ColHead>)}
            <Corner />
          </ColHeaders>
          <SheetBody>
            <WhitePane>
              <MacroButton>بررسي وضعيت قرارداد</MacroButton>
            </WhitePane>
            <DataGrid>
              {headers.map((h, i) => <HeadCell key={h} $edge={i === headers.length - 1}><FilterBtn />{h}</HeadCell>)}
              <RowHead>1</RowHead>
              {dataRows.map(i => {
                const r = rows[i] ?? {};
                const alt = i % 2 === 1;
                return (
                  <React.Fragment key={i}>
                    <Cell $alt={alt} />
                    <Cell $alt={alt} $bg={r.gBg} $kind="ar">{r.g}</Cell>
                    <Cell $alt={alt} $kind="num">{r.f}</Cell>
                    <Cell $alt={alt} $kind="date">{r.e}</Cell>
                    <Cell $alt={alt} $kind="date">{r.d}</Cell>
                    <Cell $alt={alt} $kind="ar">{r.c}</Cell>
                    <Cell $alt={alt} $kind="ar">{r.b}</Cell>
                    <Cell $alt={alt} $kind="num">{i + 1}</Cell>
                    <RowHead>{i + 2}</RowHead>
                  </React.Fragment>
                );
              })}
            </DataGrid>
          </SheetBody>
        </SheetMain>
      </Sheet>

      <TabBar>
        <HScroll>
          <HButton><Tri d="l" /></HButton>
          <HTrough />
          <HThumb />
          <HButton><Tri d="r" /></HButton>
        </HScroll>
        <HDots $w={32}><i /><i /><i /></HDots>
        <PlusWrap>
          <Ic w={16} h={16}>
            <circle cx="8" cy="8" r="7.2" stroke="#777" strokeWidth="1.2" />
            <path d="M4 8H12M8 4V12" stroke="#666" strokeWidth="1.5" />
          </Ic>
        </PlusWrap>
        <SheetTabs>
          <SheetTab $w={57}>نمودار</SheetTab>
          <SheetTab $w={72} $on>قراردادها</SheetTab>
          <SheetTab $w={66} $last>ليست‌ها</SheetTab>
        </SheetTabs>
        <NavArrows><Tri d="l" c="#c8c8c8" /><Tri d="r" c="#c8c8c8" /></NavArrows>
      </TabBar>

      <Status>
        <ReadyText>Ready</ReadyText>
        <ViewGroup>
          <ViewBtn $on>
            <Ic w={15} h={13}><path d="M.5 .5H14.5V12.5H.5ZM.5 4.5H14.5M.5 8.5H14.5M5 .5V12.5M10 .5V12.5" stroke="#666" /></Ic>
          </ViewBtn>
          <ViewBtn>
            <Ic w={13} h={13}><path d="M.5 .5H12.5V12.5H.5Z" stroke="#666" /><path d="M3.5 3.5H9.5V9.5H3.5ZM4 5.5H9M4 7.5H9" stroke="#888" /></Ic>
          </ViewBtn>
          <ViewBtn>
            <Ic w={13} h={12}><path d="M.5 .5H12.5V11.5H.5ZM6.5 .5V7.5H.5M6.5 7.5H12.5" stroke="#666" /></Ic>
          </ViewBtn>
          <ZoomSign>-</ZoomSign>
          <Slider><SliderTick /><SliderThumb /></Slider>
          <ZoomSign>+</ZoomSign>
          <ZoomPct>70%</ZoomPct>
        </ViewGroup>
      </Status>
      <BottomLine />
    </App_>
  );
}
